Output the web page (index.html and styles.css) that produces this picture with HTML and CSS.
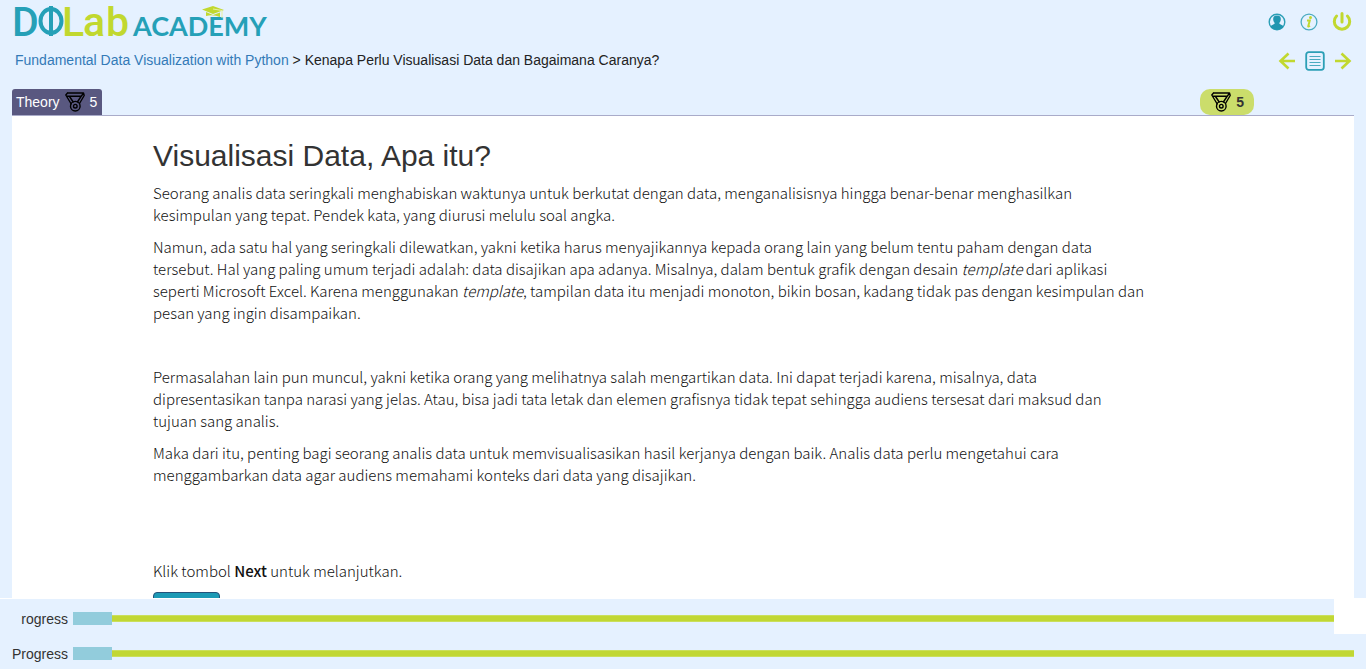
FILE: index.html
```html
<!DOCTYPE html>
<html lang="id">
<head>
<meta charset="utf-8">
<title>DQLab Academy</title>
<link rel="stylesheet" href="styles.css">
</head>
<body>
<svg class="sprite" aria-hidden="true">
  <symbol id="medal" viewBox="0 0 20 20">
    <g fill="none" stroke="#000" stroke-width="1.4" stroke-linejoin="round" stroke-linecap="round">
      <path d="M2.500 1H18.500L19.200 3.500L14.500 11.500M2.500 1L.8 3L6.200 12M2.200 4.200H16M4.500 4.500L8.200 10M16.200 4.200L18.500 1.200M16 4.500L12.400 10"/>
      <circle cx="10.300" cy="14.200" r="4.800"/>
      <circle cx="10.300" cy="14.200" r="1.800"/>
    </g>
  </symbol>
</svg>

<header class="header">
  <div class="bar">
    <a class="logo" href="#" aria-label="DQLab Academy">
      <svg width="256" height="40" viewBox="0 0 256 40">
        <g class="logo-big">
          <text class="teal" x="-3" y="34">D</text>
          <text class="lime" x="47" y="34">L</text>
          <text class="lime" x="68" y="34">a</text>
          <text class="lime" x="91" y="34">b</text>
        </g>
        <g class="logo-mark">
          <ellipse cx="36" cy="19" rx="10.500" ry="12"/>
          <path d="M36 4V34"/>
        </g>
        <text class="logo-small teal" x="118" y="34">ACADEMY</text>
        <path fill="#c1d82f" d="M187 7.500L198 4L209 8L198 12zM191 10L198 13L205 10.500V15Q198 12 191 14z"/>
        <path d="M198 7L207 8.500V16" fill="none" stroke="#e9f0a0"/>
      </svg>
    </a>
    <nav class="icons">
      <a href="#" aria-label="Profil"><svg width="18" height="18" viewBox="0 0 18 18"><circle cx="9" cy="9" r="7.800" fill="#e5f1ff" stroke="#2b9fb6" stroke-width="1.400"/><path fill="#2196b0" d="M9 2.500C11.800 2.500 13 4 12.800 6.500C12.700 8 12 9 11.400 9.800V10.800L15 12.800V14.500Q9 19 3 14.500V12.800L6.600 10.800V9.800C6 9 5.300 8 5.200 6.500C5 4 6.200 2.500 9 2.500z"/></svg></a>
      <a href="#" aria-label="Info"><svg width="18" height="18" viewBox="0 0 18 18"><circle cx="9" cy="9" r="7.900" fill="none" stroke="#4aabc0" stroke-width="1.300"/><circle cx="10.500" cy="4.500" r="1.500" fill="#c1d82f"/><path d="M7 7.500H9.800L8.200 13.300Q8.300 14 10 12.800" fill="none" stroke="#c1d82f" stroke-width="2"/></svg></a>
      <a href="#" aria-label="Keluar"><svg width="20" height="20" viewBox="0 0 20 20"><path d="M4.600 4A7.700 7.700 0 1 0 15.400 4M10 1.500V10" fill="none" stroke="#c1d82f" stroke-width="3" stroke-linecap="round"/></svg></a>
    </nav>
  </div>
  <div class="bar crumbs">
    <div><a class="link" href="#">Fundamental Data Visualization with Python</a> &gt; Kenapa Perlu Visualisasi Data dan Bagaimana Caranya?</div>
    <nav class="icons pager">
      <a href="#" aria-label="Sebelumnya"><svg width="18" height="18" viewBox="0 0 18 18"><path d="M10.500 1.500L2.500 9L10.500 16.500M2.500 9H17" fill="none" stroke="#c1d82f" stroke-width="2.600"/></svg></a>
      <a href="#" aria-label="Daftar isi"><svg width="20" height="20" viewBox="0 0 20 20"><rect x="1.200" y="1.200" width="17.600" height="17.600" rx="2.500" fill="none" stroke="#2b9fb6" stroke-width="1.800"/><path d="M4.500 5.500H15.500M4.500 8.500H15.500M4.500 11.500H15.500M4.500 14.500H15.500" stroke="#4aabc0" stroke-width="1.200"/></svg></a>
      <a href="#" aria-label="Berikutnya"><svg width="18" height="18" viewBox="0 0 18 18"><path d="M7.500 1.500L15.500 9L7.500 16.500M15.500 9H1" fill="none" stroke="#c1d82f" stroke-width="2.600"/></svg></a>
    </nav>
  </div>
</header>

<div class="tabs">
  <div class="tab"><span>Theory</span><svg class="medal"><use href="#medal"/></svg><span>5</span></div>
  <div class="score"><svg class="medal"><use href="#medal"/></svg><span>5</span></div>
</div>

<main class="content">
  <article class="article">
    <h1>Visualisasi Data, Apa itu?</h1>
    <p>Seorang analis data seringkali menghabiskan waktunya untuk berkutat dengan data, menganalisisnya hingga benar-benar menghasilkan kesimpulan yang tepat. Pendek kata, yang diurusi melulu soal angka.</p>
    <p>Namun, ada satu hal yang seringkali dilewatkan, yakni ketika harus menyajikannya kepada orang lain yang belum tentu paham dengan data tersebut. Hal yang paling umum terjadi adalah: data disajikan apa adanya. Misalnya, dalam bentuk grafik dengan desain <em>template</em> dari aplikasi seperti Microsoft Excel. Karena menggunakan <em>template</em>, tampilan data itu menjadi monoton, bikin bosan, kadang tidak pas dengan kesimpulan dan pesan yang ingin disampaikan.</p>
    <p class="spaced">Permasalahan lain pun muncul, yakni ketika orang yang melihatnya salah mengartikan data. Ini dapat terjadi karena, misalnya, data dipresentasikan tanpa narasi yang jelas. Atau, bisa jadi tata letak dan elemen grafisnya tidak tepat sehingga audiens tersesat dari maksud dan tujuan sang analis.</p>
    <p>Maka dari itu, penting bagi seorang analis data untuk memvisualisasikan hasil kerjanya dengan baik. Analis data perlu mengetahui cara menggambarkan data agar audiens memahami konteks dari data yang disajikan.</p>
    <p class="closing">Klik tombol <strong>Next</strong> untuk melanjutkan.</p>
    <button class="next" type="button" aria-label="Next"></button>
  </article>
</main>

<footer class="footer">
  <div class="overlay">
    <div class="row row-cut">
      <span class="label">rogress</span>
      <div class="meter" role="progressbar" aria-label="Progress" aria-valuenow="3" aria-valuemin="0" aria-valuemax="100"><div class="done"></div><div class="track"></div></div>
    </div>
  </div>
  <div class="row">
    <span class="label">Progress</span>
    <div class="meter" role="progressbar" aria-label="Progress" aria-valuenow="3" aria-valuemin="0" aria-valuemax="100"><div class="done"></div><div class="track"></div></div>
  </div>
</footer>
</body>
</html>
```

FILE: styles.css
```css
* { box-sizing: border-box; }
body {
  margin: 0;
  height: 100vh;
  overflow: hidden;
  display: flex;
  flex-direction: column;
  background: #e5f1ff;
  color: #333;
  font: 14px/20px "Liberation Sans", Arial, sans-serif;
}
svg { display: block; overflow: visible; }
.sprite { display: none; }
.header { padding: 3px 14px 0 15px; color: #222; }
.bar { display: flex; justify-content: space-between; align-items: center; height: 37px; }
.crumbs { height: 40px; }
.link { color: #337ab7; text-decoration: none; }
.logo-big { font: 500 41px Roboto, sans-serif; }
.logo-mark { fill: none; stroke: #25a0b7; stroke-width: 4; }
.logo-small { font: bold 27px Lato, sans-serif; }
.teal { fill: #25a0b7; }
.lime { fill: #c1d82f; }
.icons { display: flex; align-items: center; gap: 14px; }
.pager { gap: 9px; padding-top: 2px; }
.tabs {
  display: flex;
  justify-content: space-between;
  align-items: flex-end;
  height: 36px;
  margin: 0 12px;
  padding-right: 100px;
  border-bottom: 1px solid #a9abc9;
}
.tab, .score { display: flex; align-items: center; gap: 5px; height: 26px; }
.tab { padding: 0 5px 0 4px; background: #595880; color: #fff; border-radius: 3px 3px 0 0; }
.score { padding: 0 10px 0 11px; background: #cbdd6b; border-radius: 10px; font-weight: bold; }
.medal { width: 20px; height: 20px; }
.content { flex: 1; min-height: 0; overflow: hidden; margin: 0 12px; background: #fff; }
.article {
  max-width: 993px;
  margin-left: 141px;
  padding-top: 23px;
  color: #111;
  font: 300 15px/22px "Noto Sans CJK SC", sans-serif;
}
.article h1 { margin: 0 0 10px; color: #333; font: 30px/33px "Liberation Sans", Arial, sans-serif; }
.article p { margin: 0 0 10px; }
.article strong { font-weight: 500; }
.article .spaced { margin-top: 42px; }
.article .closing { margin-top: 74px; }
.next { display: block; width: 67px; height: 34px; padding: 0; background: #1c9ab5; border: 1px solid #24527a; border-radius: 4px; }
.overlay { padding: 1px 32px 0 0; background: #fff; }
.row { display: flex; align-items: center; gap: 5px; height: 35px; padding: 4px 12px 0; background: #e5f1ff; }
.row-cut { padding-right: 0; }
.label { width: 56px; text-align: right; }
.meter { flex: 1; display: flex; align-items: center; }
.done { width: 39px; height: 13px; background: #92ccdc; }
.track { flex: 1; height: 7px; background: #c1d734; border: solid #cadf5c; border-width: 1px 0; }
```
